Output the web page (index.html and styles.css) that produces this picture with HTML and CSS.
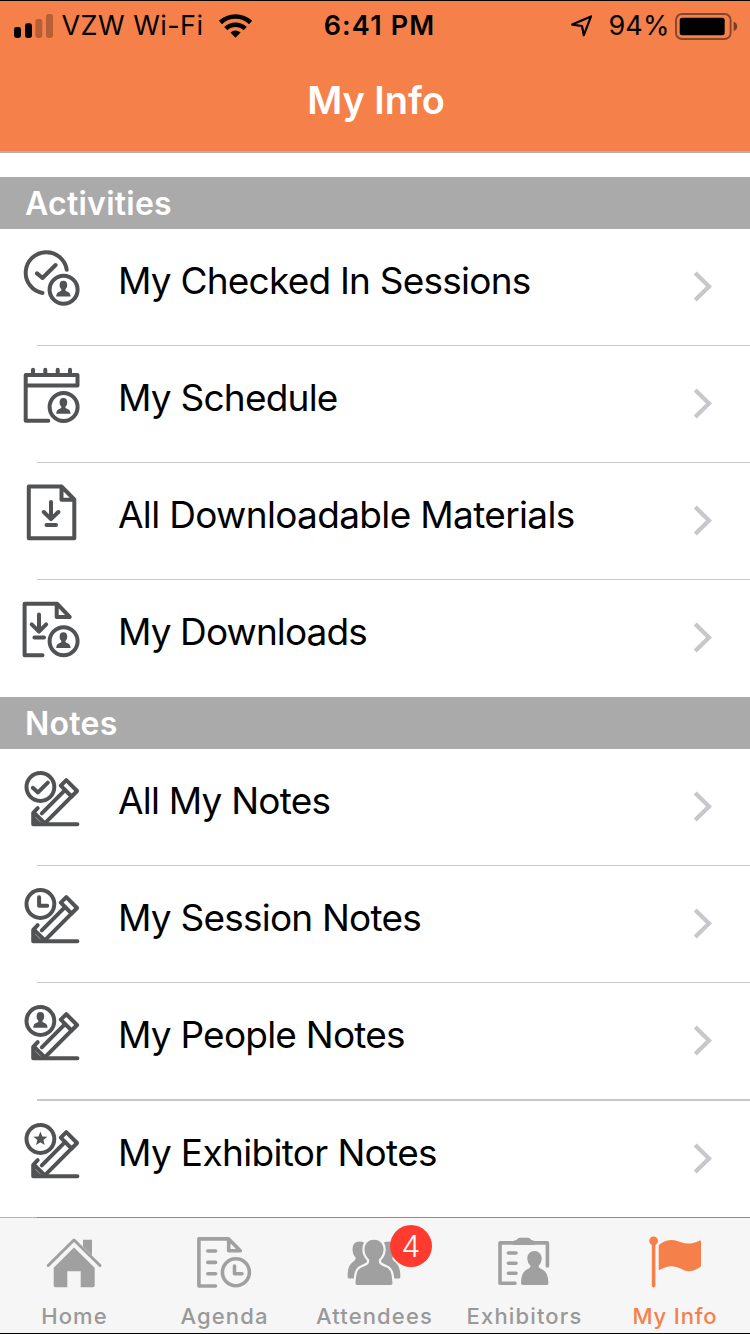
FILE: index.html
```html
<!DOCTYPE html>
<html lang="en">
<head>
<meta charset="utf-8">
<title>My Info</title>
<link rel="stylesheet" href="styles.css">
</head>
<body>
<svg class="defs" width="0" height="0" aria-hidden="true">
  <defs>
    <g id="person">
      <ellipse cx="0" cy="-4.6" rx="3.8" ry="4.4"/>
      <path d="M-2.1 -2H2.1V1C3.5 2 7 2 7.2 6.8H-7.2C-7 2 -3.5 2 -2.1 1Z"/>
    </g>
    <g id="person-badge">
      <circle class="line" cx="63.6" cy="61" r="14"/>
      <use class="solid" href="#person" x="63.4" y="61"/>
    </g>
    <g id="pencil" class="line">
      <circle cx="40.4" cy="38" r="13.9"/>
      <path d="M66.3 31.2L60.8 36.7L71.6 47.5L77.1 42Z"/>
      <path d="M65 41.2L41.8 64.4M71.2 47.9L45.3 73.8"/>
      <path d="M37.7 59.2L33.2 63.9V75.3H77.4M34.2 63.9L45.4 75M33.7 69.5L39.4 75.2"/>
    </g>
    <symbol id="chevron" viewBox="0 0 20 32">
      <path d="M3.2 3L17 16.5L3.2 30" fill="none" stroke="#c7c7cc" stroke-width="4.3"/>
    </symbol>
  </defs>
</svg>
<div class="screen">
  <header class="navbar">
    <div class="status">
      <div class="status-left">
        <svg class="signal" viewBox="14 12 40 26"><rect x="14" y="26" width="7" height="11" rx="2.4"/><rect x="25" y="22.3" width="7" height="14.7" rx="2.4"/><g opacity=".25"><rect x="35.3" y="18" width="7" height="19" rx="2.4"/><rect x="46" y="13" width="7" height="24" rx="2.4"/></g></svg>
        <span class="carrier">VZW Wi-Fi</span>
        <svg class="wifi" viewBox="218 12 36 26"><g fill="none" stroke="#000" stroke-width="4.6"><path d="M220.4 21.5A22 22 0 0 1 250.6 21.5"/><path d="M225.8 27.6A14 14 0 0 1 245.2 27.6"/></g><path d="M230.4 31.6Q235.5 27.4 240.6 31.6L235.5 36.8Z"/></svg>
      </div>
      <span class="time">6:41 PM</span>
      <div class="status-right">
        <svg class="location" viewBox="570 14 24 24"><path d="M591 16.4L572.2 24.6L582 26L583.8 35.2Z" fill="none" stroke="#000" stroke-width="2.2" stroke-linejoin="round"/></svg>
        <span class="percent">94%</span>
        <svg class="battery" viewBox="675 11 64 29"><rect x="676" y="13" width="54.6" height="25" rx="6" fill="none" stroke="#000" stroke-opacity=".45" stroke-width="1.9"/><rect x="679.7" y="16.7" width="45" height="17.6" rx="2.5"/><path d="M733.6 20.6Q737.2 22.3 737.2 25.5T733.6 30.2Z" opacity=".5"/></svg>
      </div>
    </div>
    <h1 class="title">My Info</h1>
  </header>

  <main class="list">
    <h2 class="section">Activities</h2>
    <div class="row">
      <svg class="icon" viewBox="20 0 64 116"><path class="line" d="M66.7 40.8A20.6 20.6 0 1 0 42.5 64M37 44.4L42.5 49L55.6 36"/><use href="#person-badge" y="-.3"/></svg>
      <span class="label">My Checked In Sessions</span><svg class="chevron"><use href="#chevron"/></svg>
    </div>
    <div class="row">
      <svg class="icon" viewBox="20 0 64 116"><path class="line" d="M48.3 74.7H25.7V29H77.5V39.5H25.7M33 23.7V29M45.3 23.7V29M57.7 23.7V29M70 23.7V29"/><use href="#person-badge"/></svg>
      <span class="label">My Schedule</span><svg class="chevron"><use href="#chevron"/></svg>
    </div>
    <div class="row">
      <svg class="icon" viewBox="20 0 64 116"><path class="line" d="M61.5 23.5H28.8V75.3H74.3V36.5L61.5 23.5V36.8H74.3"/><path class="line" d="M51 39V56M43.8 49L51 56.2L58.3 49M46.5 62H56"/></svg>
      <span class="label loose">All Downloadable Materials</span><svg class="chevron"><use href="#chevron"/></svg>
    </div>
    <div class="row last">
      <svg class="icon" viewBox="20 0 64 116"><path class="line" d="M42.5 75.2H24.6V23.7H57L69.7 37H56.7V24"/><path class="line" d="M39 34.6V51.5M31.7 44.3L39 51.6L46.2 44.3M34.4 57.4H44"/><use href="#person-badge" y=".3"/></svg>
      <span class="label tight">My Downloads</span><svg class="chevron"><use href="#chevron"/></svg>
    </div>

    <h2 class="section">Notes</h2>
    <div class="row">
      <svg class="icon" viewBox="20 0 64 116"><use href="#pencil"/><path class="line" d="M32.8 38.8L38 43.4L47.8 33.6"/></svg>
      <span class="label">All My Notes</span><svg class="chevron"><use href="#chevron"/></svg>
    </div>
    <div class="row">
      <svg class="icon" viewBox="20 0 64 116"><use href="#pencil"/><path class="line" d="M39.1 31.2V39.7H47.2"/></svg>
      <span class="label">My Session Notes</span><svg class="chevron"><use href="#chevron"/></svg>
    </div>
    <div class="row heavy">
      <svg class="icon" viewBox="20 0 64 116"><use href="#pencil"/><use class="solid" href="#person" x="40.4" y="38"/></svg>
      <span class="label">My People Notes</span><svg class="chevron"><use href="#chevron"/></svg>
    </div>
    <div class="row short">
      <svg class="icon" viewBox="20 0 64 116"><use href="#pencil"/><path class="solid" d="M40.4 30.6L42.3 35.4L47.4 35.7L43.4 39L44.7 44L40.4 41.2L36.1 44L37.4 39L33.4 35.7L38.5 35.4Z"/></svg>
      <span class="label loose">My Exhibitor Notes</span><svg class="chevron"><use href="#chevron"/></svg>
    </div>
  </main>

  <nav class="tabs">
    <a class="tab">
      <svg class="tab-icon" viewBox="45 1232 60 60"><path class="tline thin" d="M49.2 1265.5L75 1240L101 1265.5"/><path class="fill" d="M84 1239.8H93V1255.5L84 1246.5Z"/><path class="fill" d="M75 1247.6L95.7 1267.8V1285.5Q95.7 1287.3 94 1287.3H81.7V1271.3H68.3V1287.3H56.4Q54.7 1287.3 54.7 1285.5V1267.8Z"/></svg>
      <span class="tab-label">Home</span>
    </a>
    <a class="tab">
      <svg class="tab-icon" viewBox="194 1232 60 60"><path class="tline" d="M215.5 1286H198.9V1238.9H228.7L240.2 1250.7H228.7V1239M207.8 1251H215.6M207.8 1262.4H215.6M207.8 1273.8H215.6M234.5 1266V1273.8H242"/><circle class="tline" cx="235.9" cy="1272.3" r="13.5"/></svg>
      <span class="tab-label">Agenda</span>
    </a>
    <a class="tab">
      <svg class="tab-icon" viewBox="344 1232 60 60"><path class="fill" d="M363.5 1242Q352.5 1239.5 352.5 1249.5Q352.8 1255 355.5 1257.5C356.5 1263 347.5 1260 347.6 1277Q347.8 1278.6 349.5 1278.6H356L368 1262ZM384.5 1242Q395.5 1239.5 395.5 1249.5Q395.2 1255 392.5 1257.5C391.5 1263 400.4 1260 400.4 1277Q400.2 1278.6 398.5 1278.6H392L380 1262Z"/><path class="fill halo" d="M374 1239.7C380.5 1239.7 383.7 1244.5 383.5 1250C383.3 1254.5 381 1257.5 379 1259.5C378 1265 382.5 1265.5 386 1267.3C391.5 1269.5 391.7 1274 392.5 1283.3Q392.5 1285 390.8 1285H357.2Q355.5 1285 355.5 1283.3C356.3 1274 356.5 1269.5 362 1267.3C365.5 1265.5 370 1265 369 1259.5C367 1257.5 364.7 1254.5 364.5 1250C364.3 1244.5 367.5 1239.7 374 1239.7Z"/></svg>
      <span class="badge">4</span>
      <span class="tab-label">Attendees</span>
    </a>
    <a class="tab">
      <svg class="tab-icon" viewBox="494 1232 60 60"><path class="tline" d="M515 1283.2H500V1242.9H547.4V1266M508.4 1253H516M508.4 1263.2H516M508.4 1273.2H516"/><path class="fill" d="M513.3 1245V1242Q513.5 1240 516.5 1240Q518 1237.7 520 1237.7H528Q530 1237.7 531.3 1240Q534.3 1240 534.3 1242V1245Z"/><path class="fill" d="M534.5 1251C539 1251 541.9 1254.5 541.7 1259Q541.5 1263 538.7 1265.8C538 1270.5 548.2 1266.5 548.4 1283.3Q548.4 1285 546.7 1285H522.8Q521 1285 521 1283.3C521.3 1266.5 531 1270.5 530.4 1265.8Q527.5 1263 527.3 1259C527.1 1254.5 530 1251 534.5 1251Z"/></svg>
      <span class="tab-label">Exhibitors</span>
    </a>
    <a class="tab active">
      <svg class="tab-icon" viewBox="644 1232 60 60"><circle class="fill" cx="653.6" cy="1240.8" r="4.4"/><path class="tline" d="M653.6 1241V1285.8"/><path class="fill" d="M658.7 1246Q658.7 1244.8 660 1244Q667.5 1238.8 674.5 1240.3C680 1241.6 684 1244.3 691 1243.4Q696 1242.6 699.8 1240.6Q701 1240.3 701 1241.7V1265.5Q701 1266.7 700 1267.3Q691 1273 684.5 1270.4C678 1267.5 672 1263 660 1269.8Q658.7 1270.4 658.7 1269Z"/></svg>
      <span class="tab-label">My Info</span>
    </a>
  </nav>
</div>
</body>
</html>
```
FILE: styles.css
```css
* { box-sizing: border-box; }
body { margin: 0; font-family: "Inter", "Liberation Sans", sans-serif; background: #fff; }
.defs { position: absolute; }
svg { display: block; flex: none; }
h1, h2 { margin: 0; }

.screen {
  display: flex;
  flex-direction: column;
  width: 750px;
  height: 1334px;
  overflow: hidden;
  border-top: 1px solid #000;
  border-bottom: 1px solid #000;
  background: #fff;
}

/* Status bar and title */
.navbar { height: 152px; flex: none; background: #f5804a; border-bottom: 2px solid #b2b2b2; }
.status {
  display: grid;
  grid-template-columns: 1fr auto 1fr;
  align-items: center;
  height: 50px;
  padding: 0 11px 0 14px;
  font-size: 27px;
  line-height: 50px;
}
.status-left, .status-right { display: flex; align-items: center; }
.status-right { justify-content: flex-end; }
.signal { width: 40px; height: 26px; }
.carrier { margin-left: 7.5px; letter-spacing: .46px; }
.wifi { width: 36px; height: 26px; margin-left: 14.5px; }
.time { padding-left: 6px; font-weight: 600; letter-spacing: 1.15px; }
.location { width: 24px; height: 24px; margin-right: 15px; }
.percent { letter-spacing: .1px; }
.battery { width: 64px; height: 29px; margin-left: 5.5px; }
.title {
  padding-left: 2px;
  color: #fff;
  font-size: 38px;
  font-weight: 600;
  line-height: 98px;
  text-align: center;
  letter-spacing: -.1px;
}

/* Grouped list */
.list { flex: 1; min-height: 0; padding-top: 24px; overflow: hidden; background: #fff; }
.section {
  height: 52px;
  padding-left: 25px;
  background: #aaa;
  color: #fff;
  font-size: 32px;
  font-weight: 600;
  line-height: 54px;
  letter-spacing: .25px;
}
.row {
  display: flex;
  align-items: flex-start;
  height: 117px;
  padding: 0 38px 0 20px;
  background: linear-gradient(#c8c7cc, #c8c7cc) 37px 100% / 713px 1px no-repeat;
}
.row.last { background: none; }
.row.heavy { height: 118px; background-size: 713px 2px; }
.row.short { background: none; }
.icon { width: 64px; height: 116px; }
.label {
  flex: 1;
  margin-left: 34px;
  font-size: 37px;
  line-height: 103px;
  letter-spacing: -.78px;
  color: #000;
  white-space: nowrap;
}
.label.tight { letter-spacing: -.9px; }
.label.loose { letter-spacing: -.66px; }
.chevron { width: 20px; height: 32px; margin-top: 41px; }
.line { fill: none; stroke: #505254; stroke-width: 4; stroke-linecap: round; stroke-linejoin: round; }
.solid { fill: #505254; }

/* Bottom tab bar */
.tabs {
  display: grid;
  grid-template-columns: repeat(5, 150px);
  flex: none;
  height: 116px;
  padding-top: 1px;
  background: linear-gradient(90deg, #b2b2b2 37px, #8e8e8f 37px) top / 100% 1px no-repeat #f6f6f6;
}
.tab {
  position: relative;
  display: flex;
  flex-direction: column;
  align-items: center;
  width: 148px;
  padding-top: 14px;
  color: #999;
}
.tab.active { color: #f5804a; }
.tab-icon { width: 60px; height: 60px; color: #a0a0a0; }
.active .tab-icon { color: #f5804a; }
.tab-label { margin: 9px 0 0 1px; font-size: 22px; font-weight: 500; line-height: 30px; letter-spacing: 1.15px; white-space: nowrap; }
.active .tab-label { margin-left: 2px; letter-spacing: .85px; }
.fill { fill: currentColor; }
.halo { stroke: #f6f6f6; stroke-width: 4.4; paint-order: stroke; }
.tline { fill: none; stroke: currentColor; stroke-width: 3.6; stroke-linecap: round; stroke-linejoin: round; }
.tline.thin { stroke-width: 3; }
.badge {
  position: absolute;
  left: 90px;
  top: 7px;
  width: 42px;
  height: 42px;
  border-radius: 50%;
  background: #ff3b30;
  color: #fff;
  font-size: 30px;
  font-weight: 300;
  line-height: 42px;
  text-align: center;
}
```
